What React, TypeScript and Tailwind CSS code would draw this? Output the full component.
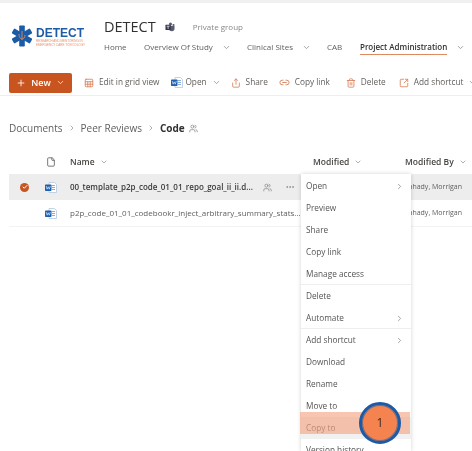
import {
  ChevronDown,
  ChevronRight,
  Check,
  File,
  Link2,
  MoreHorizontal,
  Plus,
  Share,
  Sheet,
  SquareArrowOutUpRight,
  Trash2,
  Users,
} from "lucide-react";

const navItems = [
  { label: "Home", className: "w-[40px]" },
  { label: "Overview Of Study", caret: true, className: "w-[103px]" },
  { label: "Clinical Sites", caret: true, className: "w-[80px]" },
  { label: "CAB", className: "w-[33px]" },
];

const menuGroups = [
  [
    { label: "Open", more: true },
    { label: "Preview" },
    { label: "Share" },
    { label: "Copy link" },
    { label: "Manage access" },
  ],
  [{ label: "Delete" }, { label: "Automate", more: true }],
  [
    { label: "Add shortcut", more: true },
    { label: "Download" },
    { label: "Rename" },
    { label: "Move to" },
  ],
];

function WordIcon() {
  return (
    <svg width="12" height="11" viewBox="0 0 12 11" aria-hidden className="shrink-0">
      <path d="M4 0.5h5.5L11.5 2.5v8H4z" fill="#ffffff" stroke="#b5c7de" strokeWidth="0.8" />
      <path d="M7 3.5h3M7 5.5h3M7 7.5h3" stroke="#6f9bd0" strokeWidth="0.8" />
      <rect x="0" y="2.5" width="6.5" height="6.5" rx="0.7" fill="#1d5fb0" />
      <path d="M1.2 4l0.9 3.2 1.1-2.4 1.1 2.4L5.3 4" fill="none" stroke="#ffffff" strokeWidth="0.6" />
    </svg>
  );
}

function TeamsIcon() {
  return (
    <svg width="10" height="10" viewBox="0 0 10 10" aria-hidden className="ml-[9px] shrink-0">
      <circle cx="5.5" cy="2" r="1.5" fill="#5a5a6e" />
      <circle cx="8.5" cy="3" r="1.1" fill="#5a5a6e" />
      <path d="M4 4h5.5v2.6a2.7 2.7 0 0 1-5.5 0z" fill="#5a5a6e" />
      <rect x="0.5" y="2.8" width="5.2" height="5.2" rx="0.5" fill="#33344a" />
      <path d="M1.6 4.2h3M3.1 4.2v2.8" stroke="#ffffff" strokeWidth="0.7" />
    </svg>
  );
}

function Logo() {
  return (
    <div className="flex w-[72px] items-start gap-[4px]">
      <svg width="20" height="22" viewBox="0 0 20 22" aria-hidden className="shrink-0">
        <g fill="#1c5ba6">
          <rect x="7.2" y="0.5" width="5.6" height="21" rx="0.8" />
          <rect x="7.2" y="0.5" width="5.6" height="21" rx="0.8" transform="rotate(60 10 11)" />
          <rect x="7.2" y="0.5" width="5.6" height="21" rx="0.8" transform="rotate(-60 10 11)" />
        </g>
        <path d="M10 6v9M7 9c0 4 2 5 3 5s3-1 3-4" fill="none" stroke="#e2885f" strokeWidth="0.9" />
      </svg>
      <div className="flex flex-col pt-[2px] font-['Liberation_Sans',sans-serif]">
        <span className="text-[12px] leading-[12px] font-bold text-[#1f5ca8]">DETECT</span>
        <span className="text-[3px] leading-[4px] whitespace-nowrap text-[#e8906a]">RESEARCH AND MENTORING IN</span>
        <span className="text-[3px] leading-[4px] whitespace-nowrap text-[#e8906a]">EMERGENCY CARE TOXICOLOGY</span>
      </div>
    </div>
  );
}

function ToolbarButton({
  icon,
  label,
  caret,
  className,
}: {
  icon: React.ReactNode;
  label: string;
  caret?: boolean;
  className?: string;
}) {
  return (
    <div className={`flex shrink-0 items-center gap-[5px] whitespace-nowrap ${className ?? ""}`}>
      {icon}
      <span>{label}</span>
      {caret ? <ChevronDown className="size-[9px] text-[#8a8886]" aria-hidden /> : null}
    </div>
  );
}

function ContextMenu() {
  return (
    <div className="absolute top-[174px] left-[301px] h-[277px] w-[110px] overflow-hidden bg-white pt-px text-[8.25px] text-[#555] shadow-[0_0_4px_rgba(0,0,0,0.18)]">
      {menuGroups.map((group, i) => (
        <div key={i} className={i > 0 ? "-mt-px border-t border-[#eeeeee]" : ""}>
          {group.map((item) => (
            <div key={item.label} className="flex h-[22px] items-center justify-between pr-[7px] pl-[5px]">
              <span>{item.label}</span>
              {item.more ? <ChevronRight className="size-[9px] text-[#8a8886]" aria-hidden /> : null}
            </div>
          ))}
        </div>
      ))}
      <div className="flex h-[22px] items-center bg-[#f1f1f1] pl-[5px]">Copy to</div>
      <div className="flex h-[22px] items-center pl-[5px]">Version history</div>
    </div>
  );
}

export default function App() {
  return (
    <div className="relative h-[451px] w-[472px] overflow-hidden bg-white font-['Open_Sans',sans-serif] text-[#605e5c] blur-[0.3px]">
      <div className="h-[3px] bg-[#f0f0f0]" />

      <header className="flex h-[54px] items-start pt-[14px] pl-[12px]">
        <div className="pt-[8px]">
          <Logo />
        </div>
        <div className="ml-[20px]">
          <div className="flex h-[20px] items-center">
            <span className="text-[14.5px] leading-[20px] text-[#323130]">DETECT</span>
            <TeamsIcon />
            <span className="ml-[18px] text-[8px] text-[#8a8886]">Private group</span>
          </div>
          <nav className="mt-[2px] flex items-start text-[8px] whitespace-nowrap">
            {navItems.map((item) => (
              <div key={item.label} className={`flex h-[16px] items-center gap-[9px] ${item.className}`}>
                <span>{item.label}</span>
                {item.caret ? <ChevronDown className="size-[9px] text-[#8a8886]" aria-hidden /> : null}
              </div>
            ))}
            <div className="flex items-start gap-[9px]">
              <span className="h-[16px] border-b border-[#e2885f] pt-[2px] font-semibold text-[#323130]">Project Administration</span>
              <ChevronDown className="mt-[4px] size-[9px] text-[#8a8886]" aria-hidden />
            </div>
          </nav>
        </div>
      </header>

      <div className="mt-[16px] flex h-[23px] items-center border-b border-[#eeeeee] pb-[3px] pl-[9px] text-[8.25px] whitespace-nowrap">
        <div className="flex h-[20px] w-[63px] shrink-0 items-center justify-center gap-[5px] rounded-[2px] bg-[#c8541f] text-[9px] font-semibold text-white">
          <Plus className="size-[10px]" aria-hidden />
          <span>New</span>
          <ChevronDown className="size-[9px]" aria-hidden />
        </div>
        <div className="ml-[12px] flex items-center">
          <ToolbarButton icon={<Sheet className="size-[10px] text-[#d9805a]" aria-hidden />} label="Edit in grid view" />
          <ToolbarButton
            className="ml-[12px]"
            icon={
              <span className="-mr-[3px]">
                <WordIcon />
              </span>
            }
            label="Open"
            caret
          />
          <ToolbarButton className="ml-[10px]" icon={<Share className="size-[10px] text-[#d9805a]" aria-hidden />} label="Share" />
          <ToolbarButton className="ml-[11px]" icon={<Link2 className="size-[11px] text-[#d9805a]" aria-hidden />} label="Copy link" />
          <ToolbarButton className="ml-[16px]" icon={<Trash2 className="size-[10px] text-[#d9805a]" aria-hidden />} label="Delete" />
          <ToolbarButton className="ml-[13px]" icon={<SquareArrowOutUpRight className="size-[10px] text-[#d9805a]" aria-hidden />} label="Add shortcut" caret />
        </div>
      </div>

      <div className="mt-[22px] flex h-[20px] items-center pl-[9px] text-[10px] whitespace-nowrap">
        <span>Documents</span>
        <ChevronRight className="mx-[5px] size-[8px] text-[#8a8886]" aria-hidden />
        <span>Peer Reviews</span>
        <ChevronRight className="mx-[5px] size-[8px] text-[#8a8886]" aria-hidden />
        <span className="font-bold text-[#323130]">Code</span>
        <Users className="ml-[4px] size-[9px] text-[#8a8886]" aria-hidden />
      </div>

      <div className="mt-[16px] flex h-[16px] items-center text-[8.5px] font-semibold whitespace-nowrap text-[#484644]">
        <File className="ml-[46px] size-[10px] text-[#605e5c]" aria-hidden />
        <div className="ml-[14px] flex w-[243px] items-center gap-[5px]">
          Name <ChevronDown className="size-[8px] font-normal text-[#8a8886]" aria-hidden />
        </div>
        <div className="flex w-[92px] items-center gap-[5px]">
          Modified <ChevronDown className="size-[8px] text-[#8a8886]" aria-hidden />
        </div>
        <div className="flex items-center gap-[5px]">
          Modified By <ChevronDown className="size-[8px] text-[#8a8886]" aria-hidden />
        </div>
      </div>

      <div className="mt-[4px] ml-[9px] text-[8px] whitespace-nowrap">
        <div className="flex h-[26px] items-center bg-[#ededed] pr-[10px]">
          <span className="ml-[11px] flex size-[9px] items-center justify-center rounded-full bg-[#c8541f]">
            <Check className="size-[6px] text-white" strokeWidth={4} aria-hidden />
          </span>
          <span className="ml-[16px]">
            <WordIcon />
          </span>
          <span className="ml-[13px] w-[185px] font-semibold text-[#3b3a39]">00_template_p2p_code_01_01_repo_goal_ii_ii.d...</span>
          <Users className="ml-[8px] size-[9px] text-[#8a8886]" aria-hidden />
          <MoreHorizontal className="ml-[13px] size-[10px] text-[#8a8886]" aria-hidden />
          <span className="ml-auto text-[7px]">ahady, Morrigan</span>
        </div>
        <div className="flex h-[27px] items-center border-b border-[#f3f3f3] pr-[10px]">
          <span className="ml-[36px]">
            <WordIcon />
          </span>
          <span className="ml-[13px] w-[232px] overflow-hidden">p2p_code_01_01_codebookr_inject_arbitrary_summary_stats...</span>
          <span className="ml-auto text-[7px]">ahady, Morrigan</span>
        </div>
      </div>

      <ContextMenu />

      <div className="absolute top-[412px] left-[300px] h-[22px] w-[110px] bg-[#f2a685]/65" />
      <div className="absolute top-[402px] left-[359px] flex size-[42px] items-center justify-center rounded-full border-[3px] border-[#1c5aa6] bg-[#f4834f] text-[12px] text-[#3a2a20] shadow-[inset_0_0_0_1px_#7a6f80]">
        1
      </div>
    </div>
  );
}
